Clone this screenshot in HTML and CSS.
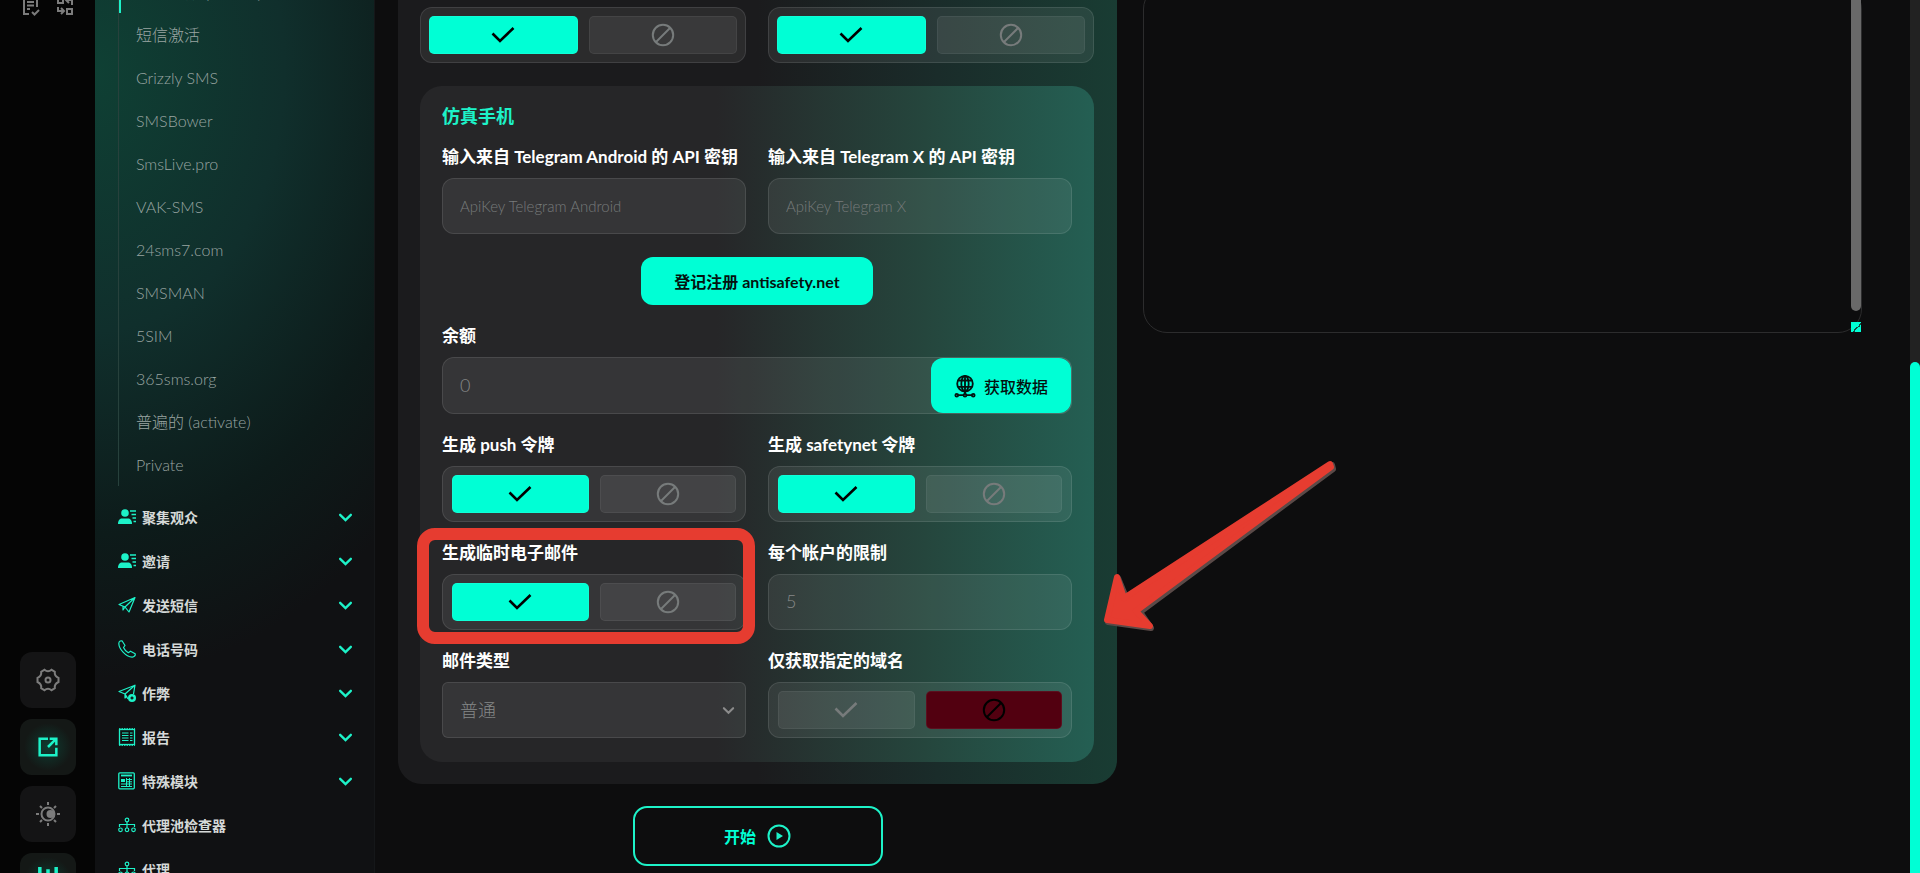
FILE: index.html
```html
<!DOCTYPE html>
<html lang="zh-CN">
  <head>
    <meta charset="UTF-8" />
    <meta name="viewport" content="width=device-width, initial-scale=1.0" />
    <title>注册</title>
    <link rel="stylesheet" href="styles.css" />
  </head>
  <body>
    <!-- shared icons -->
    <svg class="sprite" aria-hidden="true">
      <symbol id="check" viewBox="0 0 24 24"><path d="M1.500 10.500 9 18 22.500 5" fill="none" stroke="currentColor" stroke-width="2.600" /></symbol>
      <symbol id="ban" viewBox="0 0 24 24"><g fill="none" stroke="currentColor" stroke-width="2"><circle cx="12" cy="12" r="10.200" /><path d="M5 19 19 5" /></g></symbol>
      <symbol id="chevron" viewBox="0 0 14 14"><path d="M2 4.500 7 9.500 12 4.500" fill="none" stroke="currentColor" stroke-width="2.200" stroke-linecap="round" /></symbol>
      <symbol id="person" viewBox="0 0 18 18"><g fill="currentColor"><circle cx="7" cy="5" r="3.800" /><path d="M0 16c0-4 2-5.500 4-5.500h6c2 0 4 1.500 4 5.500z" /></g><path d="M12 3h6M13.500 6.500h4.500M14.500 10h3.500M15.500 13.500h2.500" stroke="currentColor" stroke-width="1.300" /></symbol>
      <symbol id="plane" viewBox="0 0 18 18"><path d="M1 8.500 17 1.500 11 16 7 11zM17 1.500 7 11M1 8.500l4 1.800V14l2-3" fill="none" stroke="currentColor" stroke-width="1.200" stroke-linejoin="round" /></symbol>
      <symbol id="phone" viewBox="0 0 18 18"><path d="M2.200 1 4 .8 7 5.500 5.500 7.500c1 2.300 2.500 4 4.800 5.200l2.200-1.500 4.700 2.600c.3 1.500-1 3-3 3.400C7.500 16.500 1 9 .8 3.500.8 2.300 1.400 1.400 2.200 1z" fill="none" stroke="currentColor" stroke-width="1.200" stroke-linejoin="round" /></symbol>
      <symbol id="planeplus" viewBox="0 0 18 18"><path d="M10 15 7 10 17 1.200 1 7.500l6 2.500v4l2-2M17 1.200 15.500 10" fill="none" stroke="currentColor" stroke-width="1.200" stroke-linejoin="round" /><circle cx="14" cy="14" r="4" fill="currentColor" /><path d="M12.500 14h3M14 12.500v3" stroke="#101214" stroke-width="1.400" /></symbol>
      <symbol id="report" viewBox="0 0 18 18"><rect x="1.500" y="1.500" width="15" height="15" fill="none" stroke="currentColor" stroke-width="1.300" /><path d="M1 .7h16M1 17.300h16" stroke="currentColor" stroke-dasharray="1.500 1" /><path d="M4 5h6.500M4 7.500h6.500M4 10h6.500M4 12.500h6.500M12 5h2.500M12 7.500h2.500M12 10h2.500M12 12.500h2.500" stroke="currentColor" /></symbol>
      <symbol id="module" viewBox="0 0 18 18"><rect x=".8" y=".8" width="15.500" height="16" rx="1" fill="none" stroke="currentColor" stroke-width="1.300" /><path d="M3 3.500h11" stroke="currentColor" stroke-width="1.800" /><rect x="3" y="7" width="4" height="3" fill="currentColor" /><path d="M3 12h11M3 14.500h11M9 7.500h5M9 9.800h5M8.500 6v9M11.500 6v9" stroke="currentColor" /></symbol>
      <symbol id="tree" viewBox="0 0 18 18"><g fill="none" stroke="currentColor" stroke-width="1.200"><circle cx="9" cy="4" r="1.800" /><circle cx="2.500" cy="13.800" r="1.800" /><circle cx="9" cy="13.800" r="1.800" /><circle cx="15.500" cy="13.800" r="1.800" /><path d="M9 6v6M1.500 11V8.500h15V11" /></g></symbol>
    </svg>

    <div class="layout">
      <aside class="rail">
        <div class="rail-top">
          <a href="#tasks" aria-label="任务"><svg viewBox="0 0 20 20"><path d="M16 11V2H3v16h5M6 6h7M6 9.500h7M6 13h3M11 16l2.500 2.500L18 14" /></svg></a>
          <a href="#apps" aria-label="应用"><svg viewBox="0 0 20 20"><path d="M3 2h5v5H3zM12 13h5v5h-5zM17 9V4h-5M14 1l-3 3 3 3M3 11v4h5M6 12l3 3-3 3" /></svg></a>
        </div>
        <div class="rail-cards">
          <button class="rail-card" aria-label="设置"><svg viewBox="0 0 24 24"><path d="M8.500 1.800 Q12 4.800 15.500 1.800 L18.800 3.700 Q18.200 8.200 22.500 10 V14 Q18.200 15.800 18.800 20.300 L15.500 22.200 Q12 19.200 8.500 22.200 L5.200 20.300 Q5.800 15.800 1.500 14 V10 Q5.800 8.200 5.200 3.700z" /><circle cx="12" cy="12" r="2.500" /></svg></button>
          <button class="rail-card glow" aria-label="打开"><svg viewBox="0 0 24 24"><path d="M12 2H2v20h20v-9M14 2h8v8M22 2 12 12" /></svg></button>
          <button class="rail-card" aria-label="主题"><svg viewBox="0 0 24 24"><circle cx="12" cy="12" r="6.500" /><circle class="solid" cx="14.500" cy="12" r="4" /><path d="M12 0v3M12 21v3M0 12h3M21 12h3M4 4l2 2M18 18l2 2M20 4l-2 2M6 18l-2 2" /></svg></button>
          <button class="rail-card glow bars" aria-label="统计"><svg viewBox="0 0 24 24"><path d="M5 0v24M12 2v22M19 0v24" /></svg></button>
        </div>
      </aside>

      <nav class="sidebar">
        <ul class="submenu">
          <li class="active"><a href="#">手动注册 (个人中)</a></li>
          <li><a href="#">短信激活</a></li>
          <li><a href="#">Grizzly SMS</a></li>
          <li><a href="#">SMSBower</a></li>
          <li><a href="#">SmsLive.pro</a></li>
          <li><a href="#">VAK-SMS</a></li>
          <li><a href="#">24sms7.com</a></li>
          <li><a href="#">SMSMAN</a></li>
          <li><a href="#">5SIM</a></li>
          <li><a href="#">365sms.org</a></li>
          <li><a href="#">普遍的 (activate)</a></li>
          <li><a href="#">Private</a></li>
        </ul>
        <ul class="menu">
          <li><a href="#"><svg><use href="#person" /></svg><span>聚集观众</span><svg class="arrow"><use href="#chevron" /></svg></a></li>
          <li><a href="#"><svg><use href="#person" /></svg><span>邀请</span><svg class="arrow"><use href="#chevron" /></svg></a></li>
          <li><a href="#"><svg><use href="#plane" /></svg><span>发送短信</span><svg class="arrow"><use href="#chevron" /></svg></a></li>
          <li><a href="#"><svg><use href="#phone" /></svg><span>电话号码</span><svg class="arrow"><use href="#chevron" /></svg></a></li>
          <li><a href="#"><svg><use href="#planeplus" /></svg><span>作弊</span><svg class="arrow"><use href="#chevron" /></svg></a></li>
          <li><a href="#"><svg><use href="#report" /></svg><span>报告</span><svg class="arrow"><use href="#chevron" /></svg></a></li>
          <li><a href="#"><svg><use href="#module" /></svg><span>特殊模块</span><svg class="arrow"><use href="#chevron" /></svg></a></li>
          <li><a href="#"><svg><use href="#tree" /></svg><span>代理池检查器</span></a></li>
          <li><a href="#"><svg><use href="#tree" /></svg><span>代理</span></a></li>
        </ul>
      </nav>

      <main class="content">
        <form class="form-col">
          <div class="panel">
            <div class="grid">
              <div class="toggle">
                <button type="button" class="on" aria-label="是"><svg><use href="#check" /></svg></button>
                <button type="button" aria-label="否"><svg><use href="#ban" /></svg></button>
              </div>
              <div class="toggle">
                <button type="button" class="on" aria-label="是"><svg><use href="#check" /></svg></button>
                <button type="button" aria-label="否"><svg><use href="#ban" /></svg></button>
              </div>
            </div>

            <section class="card">
              <h2>仿真手机</h2>
              <div class="grid">
                <div class="field">
                  <label for="key-android">输入来自 Telegram Android 的 API 密钥</label>
                  <input id="key-android" type="text" placeholder="ApiKey Telegram Android" />
                </div>
                <div class="field">
                  <label for="key-x">输入来自 Telegram X 的 API 密钥</label>
                  <input id="key-x" type="text" placeholder="ApiKey Telegram X" />
                </div>
                <div class="wide register">
                  <a class="btn" href="#">登记注册 antisafety.net</a>
                </div>
                <div class="field wide">
                  <label for="balance">余额</label>
                  <div class="balance">
                    <input id="balance" type="text" value="0" />
                    <button type="button" class="btn">
                      <svg viewBox="0 0 24 24"><circle cx="12" cy="9.500" r="8.500" /><ellipse cx="12" cy="9.500" rx="4" ry="8.500" /><path d="M12 1v20M4.500 6h15M4.500 13h15M3 22h18" /><circle class="dot" cx="3" cy="22" r="1.500" /><circle class="dot" cx="12" cy="22" r="1.500" /><circle class="dot" cx="21" cy="22" r="1.500" /></svg>
                      获取数据
                    </button>
                  </div>
                </div>
                <div class="field">
                  <span class="label">生成 push 令牌</span>
                  <div class="toggle">
                    <button type="button" class="on" aria-label="是"><svg><use href="#check" /></svg></button>
                    <button type="button" aria-label="否"><svg><use href="#ban" /></svg></button>
                  </div>
                </div>
                <div class="field">
                  <span class="label">生成 safetynet 令牌</span>
                  <div class="toggle">
                    <button type="button" class="on" aria-label="是"><svg><use href="#check" /></svg></button>
                    <button type="button" aria-label="否"><svg><use href="#ban" /></svg></button>
                  </div>
                </div>
                <div class="field marked">
                  <span class="label">生成临时电子邮件</span>
                  <div class="toggle">
                    <button type="button" class="on" aria-label="是"><svg><use href="#check" /></svg></button>
                    <button type="button" aria-label="否"><svg><use href="#ban" /></svg></button>
                  </div>
                </div>
                <div class="field">
                  <label for="limit">每个帐户的限制</label>
                  <input id="limit" type="text" value="5" />
                </div>
                <div class="field">
                  <label for="mail-type">邮件类型</label>
                  <div class="select">
                    <select id="mail-type">
                      <option>普通</option>
                    </select>
                    <svg><use href="#chevron" /></svg>
                  </div>
                </div>
                <div class="field">
                  <span class="label">仅获取指定的域名</span>
                  <div class="toggle">
                    <button type="button" aria-label="是"><svg><use href="#check" /></svg></button>
                    <button type="button" class="off" aria-label="否"><svg><use href="#ban" /></svg></button>
                  </div>
                </div>
              </div>
            </section>
          </div>

          <button type="button" class="start">
            开始
            <svg viewBox="0 0 24 24"><circle cx="12" cy="12" r="10.500" /><path d="M9.500 8 16 12 9.500 16z" /></svg>
          </button>

          <svg class="pointer" viewBox="0 0 236 174" aria-hidden="true">
            <g stroke-linejoin="round" stroke-width="6">
              <path class="shade" d="M231 6 26 141 17 119 7 163 50 169 39 153 232 10z" />
              <path class="body" d="M229 5 23 139 16 118 6 161 49 167 35 152 230 8z" />
            </g>
          </svg>
        </form>

        <div class="log-col">
          <textarea class="log" aria-label="日志" readonly></textarea>
          <span class="log-thumb"></span>
          <span class="log-grip"></span>
        </div>
      </main>

      <div class="scrollbar"><span class="thumb"></span></div>
    </div>
  </body>
</html>
```

FILE: styles.css
```css
* {
  margin: 0;
  padding: 0;
  box-sizing: border-box;
}

body {
  height: 100vh;
  overflow: hidden;
  background: #0d0d0e;
  color: #fff;
  font-family: Lato, "Noto Sans CJK SC", sans-serif;
}

ul {
  list-style: none;
}

a {
  color: inherit;
  text-decoration: none;
}

button,
input,
select,
textarea {
  font-family: inherit;
  color: inherit;
}

.sprite {
  position: absolute;
  width: 0;
  height: 0;
}

.layout {
  display: grid;
  grid-template-columns: 95px 280px 1fr 10px;
  grid-template-rows: 100vh;
  height: 100vh;
  overflow: hidden;
}

/* Icon rail */
.rail {
  display: flex;
  flex-direction: column;
  justify-content: space-between;
  height: calc(100vh + 40px);
  margin-top: -4px;
  background: #050505;
}

.rail svg {
  display: block;
  fill: none;
  stroke: #7c7c7c;
  stroke-width: 2;
}

.rail-top {
  display: flex;
  justify-content: center;
  gap: 14px;
}

.rail-top svg {
  width: 20px;
  height: 20px;
}

.rail-cards {
  display: flex;
  flex-direction: column;
  align-items: center;
  gap: 11px;
}

.rail-card {
  display: flex;
  align-items: center;
  justify-content: center;
  width: 56px;
  height: 56px;
  border: 0;
  border-radius: 12px;
  background: #141415;
}

.rail-card svg {
  width: 24px;
  height: 24px;
}

.rail-card .solid {
  fill: #7c7c7c;
  stroke: none;
}

.rail-card.glow {
  background: radial-gradient(circle, #0f3a30, #141816 60%);
}

.rail-card.glow svg {
  width: 20px;
  height: 20px;
  stroke: #1df2c8;
  stroke-width: 3;
  overflow: visible;
}

.rail-card.bars svg {
  width: 28px;
  height: 28px;
}

/* Sidebar */
.sidebar {
  height: 100vh;
  overflow: hidden;
  border-right: 1px solid #151719;
  background: radial-gradient(ellipse 420px 580px at 0 70px, #0f4034 0%, #102f2c 45%, #0d1b1a 80%, #101113 105%);
}

.submenu {
  margin: -30px 0 9px 23px;
  border-left: 1px solid #27413c;
}

.submenu li {
  margin-left: 17px;
  font-size: 16px;
  font-weight: 300;
  line-height: 43px;
  color: #9aa5a2;
}

.submenu .active {
  margin-left: 0;
  padding-left: 16px;
  border-left: 2px solid #1df2c8;
  font-weight: 700;
  color: #fff;
}

.menu li a {
  display: flex;
  align-items: center;
  gap: 6px;
  height: 44px;
  padding: 0 21px 0 23px;
  font-size: 14px;
  font-weight: 700;
  color: #d5d9d8;
}

.menu svg {
  width: 18px;
  height: 18px;
  color: #1df2c8;
}

.menu .arrow {
  width: 15px;
  height: 15px;
  margin-left: auto;
}

/* Content */
.content {
  display: grid;
  grid-template-columns: 1fr 1fr;
  gap: 26px;
  align-items: start;
  margin-top: -15px;
  padding: 0 48px 0 23px;
}

.form-col,
.log-col {
  position: relative;
}

.panel {
  display: flex;
  flex-direction: column;
  gap: 23px;
  padding: 22px 23px 22px 22px;
  border-radius: 0 0 24px 24px;
  background: linear-gradient(to right, #1b1b1d 50%, #1a2c2a 75%, #193c33);
}

.grid {
  display: grid;
  grid-template-columns: 1fr 1fr;
  gap: 20px 22px;
}

.wide {
  grid-column: 1 / -1;
}

.card {
  padding: 20px 22px 24px;
  border-radius: 22px;
  background: linear-gradient(to right, #262628 44%, #25463d 75%, #245f53);
}

.card h2 {
  margin-bottom: 20px;
  font-size: 18px;
  line-height: 20px;
  color: #1df2c8;
}

.field label,
.field .label {
  display: block;
  margin-bottom: 10px;
  font-size: 17px;
  font-weight: 700;
  line-height: 22px;
  white-space: nowrap;
}

.field input,
.field select,
.toggle {
  width: 100%;
  height: 56px;
  border: 1px solid rgba(255, 255, 255, 0.1);
  border-radius: 12px;
  background: rgba(255, 255, 255, 0.07);
}

.field input {
  padding: 0 17px 2px;
  font-size: 18px;
  font-weight: 300;
  color: #858888;
}

.field input::placeholder {
  font-size: 15px;
  color: #777b7b;
}

.toggle {
  display: flex;
  gap: 11px;
  padding: 8px;
}

.field .toggle {
  padding: 8px 9px;
}

.toggle button {
  display: flex;
  flex: 1;
  align-items: center;
  justify-content: center;
  border: 1px solid rgba(255, 255, 255, 0.06);
  border-radius: 5px;
  background: rgba(255, 255, 255, 0.07);
  color: #777b7b;
}

.toggle svg {
  width: 24px;
  height: 24px;
}

.toggle .on {
  background: #00ffd5;
  color: #000;
}

.toggle .off {
  background: #520010;
  color: #000;
}

.register {
  display: flex;
  justify-content: center;
  padding-top: 3px;
}

.btn {
  display: flex;
  align-items: center;
  justify-content: center;
  gap: 8px;
  height: 48px;
  padding: 0 33px;
  border: 0;
  border-radius: 12px;
  background: #00ffd5;
  color: #04120f;
  font-size: 16px;
  font-weight: 700;
}

.balance {
  display: flex;
  position: relative;
}

.balance input {
  height: 57px;
}

.balance .btn {
  position: absolute;
  top: 1px;
  right: 1px;
  width: 140px;
  height: 55px;
  padding: 0;
  font-weight: 500;
}

.balance svg {
  width: 22px;
  height: 22px;
  fill: none;
  stroke: #04120f;
  stroke-width: 2;
  overflow: visible;
}

.balance .dot {
  fill: #00ffd5;
}

.select {
  position: relative;
}

.field select {
  padding: 0 17px;
  border-radius: 6px;
  appearance: none;
  font-size: 18px;
  font-weight: 300;
  color: #858888;
}

.select svg {
  position: absolute;
  top: 22px;
  right: 11px;
  width: 13px;
  height: 13px;
  color: #8c8c8c;
}

/* Red marker and arrow */
.marked {
  position: relative;
}

.marked::after {
  content: "";
  position: absolute;
  inset: -14px -9px -14px -25px;
  border: 12px solid #e63c30;
  border-radius: 18px;
}

.pointer {
  position: absolute;
  top: 474px;
  right: -220px;
  width: 236px;
  height: 174px;
}

.pointer .shade {
  fill: #5a4a48;
  stroke: #5a4a48;
}

.pointer .body {
  fill: #e63c30;
  stroke: #e63c30;
}

.start {
  display: flex;
  align-items: center;
  justify-content: center;
  gap: 11px;
  width: 250px;
  height: 60px;
  margin: 22px auto 0;
  border: 2px solid #1df2c8;
  border-radius: 14px;
  background: transparent;
  color: #00ffd5;
  font-size: 16px;
  font-weight: 700;
}

.start svg {
  width: 24px;
  height: 24px;
  fill: none;
  stroke: #1df2c8;
  stroke-width: 2;
}

.start path {
  fill: #1df2c8;
  stroke: none;
}

/* Log */
.log {
  display: block;
  width: 100%;
  height: 348px;
  border: 1px solid #2c2c2d;
  border-radius: 24px;
  background: transparent;
  resize: none;
}

.log-thumb {
  position: absolute;
  top: 0;
  right: 1px;
  bottom: 22px;
  width: 10px;
  border-radius: 5px;
  background: #696969;
}

.log-grip {
  position: absolute;
  right: 1px;
  bottom: 1px;
  width: 10px;
  height: 10px;
  background: linear-gradient(135deg, #00ffd5 55%, #124a40 55%, #124a40 65%, #00ffd5 65%);
}

/* Page scrollbar */
.scrollbar {
  display: flex;
  align-items: flex-end;
  background: #222;
}

.scrollbar .thumb {
  width: 10px;
  height: 58.5%;
  border-radius: 5px 5px 0 0;
  background: #00ffd5;
}
```
